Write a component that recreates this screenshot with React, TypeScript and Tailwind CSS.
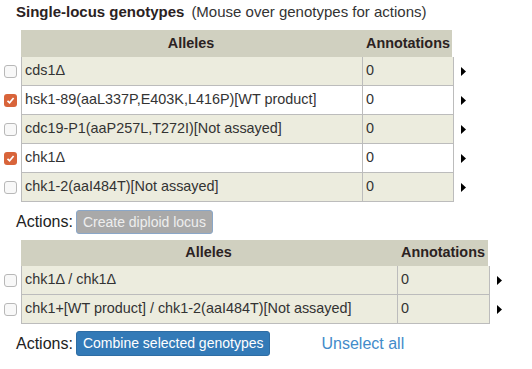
import React from 'react';

interface Row {
  allele: string;
  count: number;
  checked?: boolean;
}

const singleRows: Row[] = [
  { allele: 'cds1Δ', count: 0 },
  { allele: 'hsk1-89(aaL337P,E403K,L416P)[WT product]', count: 0, checked: true },
  { allele: 'cdc19-P1(aaP257L,T272I)[Not assayed]', count: 0 },
  { allele: 'chk1Δ', count: 0, checked: true },
  { allele: 'chk1-2(aaI484T)[Not assayed]', count: 0 },
];

const diploidRows: Row[] = [
  { allele: 'chk1Δ / chk1Δ', count: 0 },
  { allele: 'chk1+[WT product] / chk1-2(aaI484T)[Not assayed]', count: 0 },
];

const Checkbox = ({ checked }: { checked?: boolean }) =>
  checked ? (
    <div className="w-[13px] h-[13px] rounded-[3px] bg-[#d8643a] flex items-center justify-center">
      <svg width="9" height="9" viewBox="0 0 9 9">
        <path d="M1.5 4.8 L3.6 6.8 L7.6 2" stroke="white" strokeWidth="1.7" fill="none" />
      </svg>
    </div>
  ) : (
    <div className="w-[13px] h-[13px] rounded-[3px] border border-[#b8b8b8] bg-[#f8f8f8]" />
  );

const Arrow = () => (
  <svg width="5" height="9" viewBox="0 0 5 9">
    <path d="M0 0 L5 4.5 L0 9 Z" fill="#000" />
  </svg>
);

const GenotypeTable = ({
  rows,
  allelesWidth,
  annWidth,
  headerHeight,
}: {
  rows: Row[];
  allelesWidth: string;
  annWidth: string;
  headerHeight: string;
}) => (
  <div className="flex flex-col text-[14.4px]">
    <div className="flex">
      <div className="w-[21px]" />
      <div className={`flex ${headerHeight} bg-[#d0d0c0] font-bold text-[#2b2222]`}>
        <div className={`${allelesWidth} flex items-center justify-center border-r border-[#d0d0c0]`}>Alleles</div>
        <div className={`${annWidth} flex items-center px-1`}>Annotations</div>
      </div>
    </div>
    {rows.map((r, i) => (
      <div key={i} className="flex items-center">
        <div className="w-[21px] flex justify-start pl-[4px]">
          <Checkbox checked={r.checked} />
        </div>
        <div
          className={`flex h-[29px] border-l border-r border-b border-[#bcbcbc] ${
            r.checked ? 'bg-white' : 'bg-[#ececde]'
          }`}
        >
          <div className={`${allelesWidth} flex items-center pl-[3px] border-r border-[#bcbcbc]`}>{r.allele}</div>
          <div className={`${annWidth} flex items-center pl-[3px]`}>{r.count}</div>
        </div>
        <div className="pl-[7px] flex items-center">
          <Arrow />
        </div>
      </div>
    ))}
  </div>
);

export default function App() {
  return (
    <div className="w-[532px] h-[369px] bg-white text-[14px] text-[#333] font-['Liberation_Sans',Arial,sans-serif] pt-[2px]">
      <div className="pl-[16px] h-[28px] flex items-start">
        <span className="font-bold text-[15px] text-[#2b2222] leading-[20px]">Single-locus genotypes</span>
        <span className="ml-[7px] text-[15px] leading-[20px]">(Mouse over genotypes for actions)</span>
      </div>
      <GenotypeTable rows={singleRows} allelesWidth="w-[341px]" annWidth="w-[90px]" headerHeight="h-[27px]" />
      <div className="flex items-center pl-[16px] mt-[8px] h-[24px]">
        <span className="text-[#222] text-[16px]">Actions:</span>
        <button className="ml-[3px] h-[24px] px-[6px] rounded-[3px] bg-[#a9a9a9] border border-[#8aa7c8] text-[#eeeeee] text-[14px]">
          Create diploid locus
        </button>
      </div>
      <div className="mt-[6px]">
        <GenotypeTable rows={diploidRows} allelesWidth="w-[376px]" annWidth="w-[91px]" headerHeight="h-[26px]" />
      </div>
      <div className="flex items-center pl-[16px] mt-[7px] h-[25px]">
        <span className="text-[#222] text-[16px]">Actions:</span>
        <button className="ml-[3px] h-[25px] px-[6px] rounded-[3px] bg-[#337ab7] border border-[#2e6da4] text-white text-[14px]">
          Combine selected genotypes
        </button>
        <span className="ml-[51px] text-[16px] text-[#428bca]">Unselect all</span>
      </div>
    </div>
  );
}
